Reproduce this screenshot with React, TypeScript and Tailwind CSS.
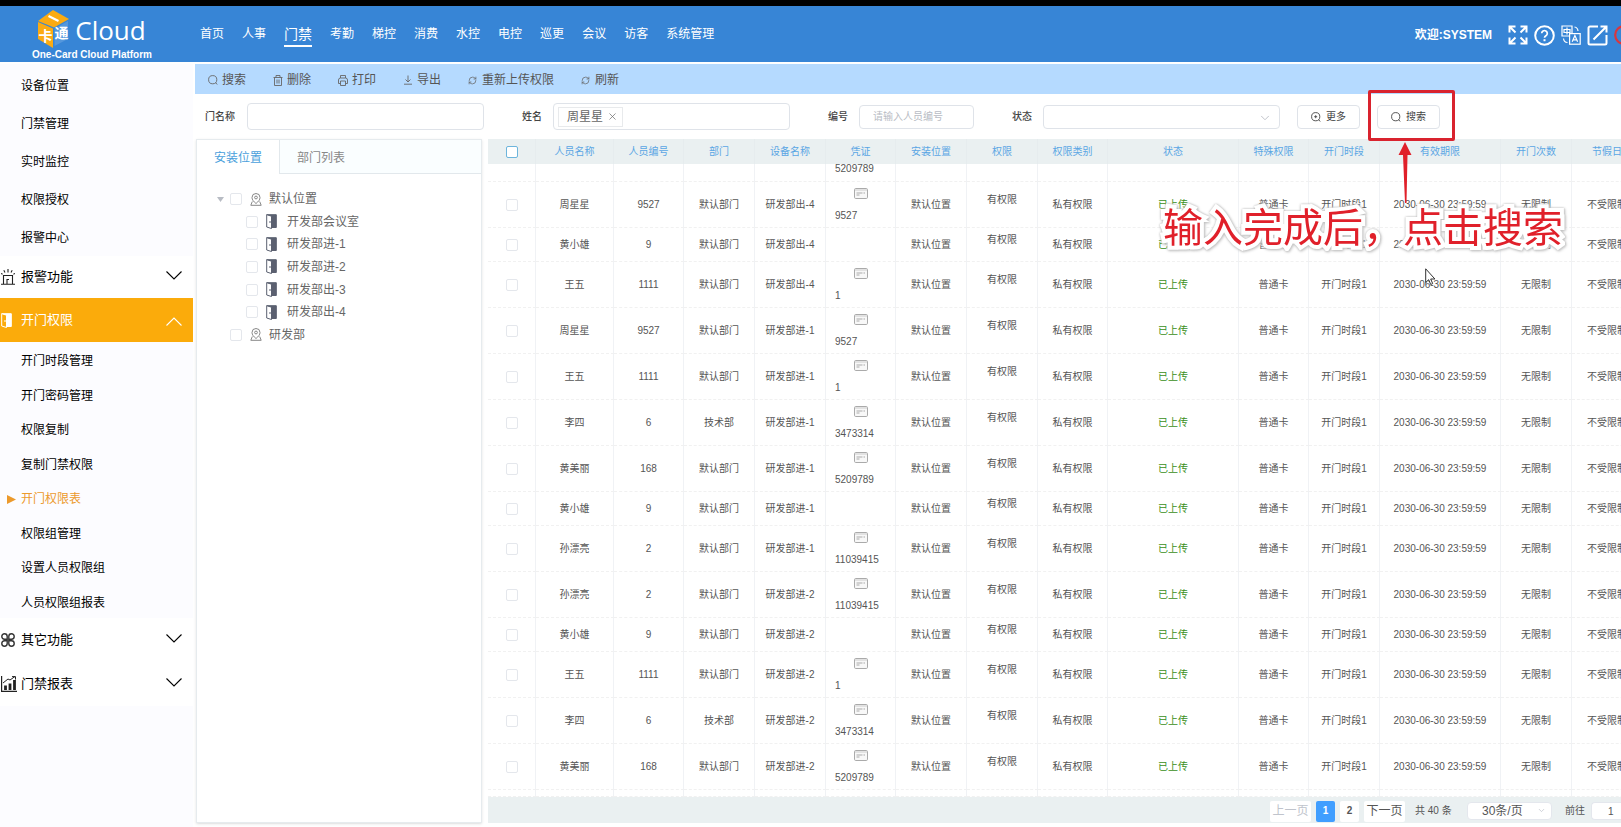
import type { ReactNode } from "react";
import clsx from "clsx";
import { ChevronDown, RefreshCw, X } from "lucide-react";

const navItems = ["首页", "人事", "门禁", "考勤", "梯控", "消费", "水控", "电控", "巡更", "会议", "访客", "系统管理"];

const topMenu = ["设备位置", "门禁管理", "实时监控", "权限授权", "报警中心"];

const subMenu = [
  "开门时段管理",
  "开门密码管理",
  "权限复制",
  "复制门禁权限",
  "开门权限表",
  "权限组管理",
  "设置人员权限组",
  "人员权限组报表",
];

const doors = ["开发部会议室", "研发部进-1", "研发部进-2", "研发部出-3", "研发部出-4"];

const columns = [
  { title: "人员名称", width: "w-[78px]" },
  { title: "人员编号", width: "w-[70px]" },
  { title: "部门", width: "w-[71px]" },
  { title: "设备名称", width: "w-[71px]" },
  { title: "凭证", width: "w-[70px]" },
  { title: "安装位置", width: "w-[71px]" },
  { title: "权限", width: "w-[71px]" },
  { title: "权限类别", width: "w-[70px]" },
  { title: "状态", width: "w-[131px]" },
  { title: "特殊权限", width: "w-[70px]" },
  { title: "开门时段", width: "w-[71px]" },
  { title: "有效期限", width: "w-[121px]" },
  { title: "开门次数", width: "w-[71px]" },
  { title: "节假日", width: "w-[71px]" },
];

type Row = { name: string; code: string; dept: string; device: string; card?: string };

const rows: Row[] = [
  { name: "周星星", code: "9527", dept: "默认部门", device: "研发部出-4", card: "9527" },
  { name: "黄小雄", code: "9", dept: "默认部门", device: "研发部出-4" },
  { name: "王五", code: "1111", dept: "默认部门", device: "研发部出-4", card: "1" },
  { name: "周星星", code: "9527", dept: "默认部门", device: "研发部进-1", card: "9527" },
  { name: "王五", code: "1111", dept: "默认部门", device: "研发部进-1", card: "1" },
  { name: "李四", code: "6", dept: "技术部", device: "研发部进-1", card: "3473314" },
  { name: "黄美丽", code: "168", dept: "默认部门", device: "研发部进-1", card: "5209789" },
  { name: "黄小雄", code: "9", dept: "默认部门", device: "研发部进-1" },
  { name: "孙漂亮", code: "2", dept: "默认部门", device: "研发部进-1", card: "11039415" },
  { name: "孙漂亮", code: "2", dept: "默认部门", device: "研发部进-2", card: "11039415" },
  { name: "黄小雄", code: "9", dept: "默认部门", device: "研发部进-2" },
  { name: "王五", code: "1111", dept: "默认部门", device: "研发部进-2", card: "1" },
  { name: "李四", code: "6", dept: "技术部", device: "研发部进-2", card: "3473314" },
  { name: "黄美丽", code: "168", dept: "默认部门", device: "研发部进-2", card: "5209789" },
];

const Logo = () => (
  <div className="w-[179px] pl-[5px] pt-1 flex flex-col items-center text-white shrink-0">
    <div className="flex items-center gap-1.5 h-[38px]">
      <svg width="31" height="38" viewBox="0 0 31 38">
        <path d="M15 0 31 9 16 17.500 0 11Z" fill="#fbab12" />
        <path d="M0 12 15 18.500V38L0 29Z" fill="#fbab12" />
        <path d="M16.500 18.500 30 11V29L16.500 36Z" fill="#fff" opacity=".15" />
        <path d="m10.500 6 10 5" stroke="#fff" strokeWidth="2.200" />
        <text x="0.500" y="31" fontSize="14" fontWeight="700" fill="#fff">卡</text>
        <text x="16.500" y="28" fontSize="14" fontWeight="700" fill="#fff">通</text>
      </svg>
      <span className="font-['Open_Sans',sans-serif] text-[26px] leading-[38px] pt-0.5">Cloud</span>
    </div>
    <span className="text-[10px] leading-[14px] font-bold">One-Card Cloud Platform</span>
  </div>
);

const ExpandIcon = () => (
  <svg width="20" height="20" viewBox="0 0 20 20" fill="none" stroke="#fff" strokeWidth="2">
    <path d="M1.500 7.500v-6h6M1.500 1.500l6 6M12.500 1.500h6v6M18.500 1.500l-6 6M1.500 12.500v6h6M1.500 18.500l6-6M18.500 12.500v6h-6M18.500 18.500l-6-6" />
  </svg>
);

const HelpIcon = () => (
  <svg width="21" height="21" viewBox="0 0 21 21" fill="none" stroke="#fff" strokeWidth="2">
    <circle cx="10.500" cy="10.500" r="9.300" />
    <path d="M7.700 8.300a2.800 2.800 0 1 1 4.300 2.400c-1 .7-1.500 1-1.500 2.100" strokeWidth="1.700" />
    <path d="M10.500 14.200v2" />
  </svg>
);

const LanguageIcon = () => (
  <svg width="20" height="20" viewBox="0 0 20 20" fill="none" stroke="#fff" strokeWidth="1.200">
    <path d="M8 11H1V1h10v7M3 4.500h6v3H3zM6 2.500v7" />
    <rect x="8.600" y="8.600" width="10.600" height="10.600" />
    <path d="m11.200 16.800 2.700-6.300 2.700 6.300M12.200 14.800h3.400M13.500 2c2 .3 3.300 1.600 3.500 4M2.500 13.500c.2 2.500 1.500 3.800 4 4" />
  </svg>
);

const EditIcon = () => (
  <svg width="21" height="21" viewBox="0 0 21 21" fill="none" stroke="#fff" strokeWidth="2">
    <path d="M11 1.500H3A1.500 1.500 0 0 0 1.500 3v15A1.500 1.500 0 0 0 3 19.500h15a1.500 1.500 0 0 0 1.500-1.500v-8M6.500 14.500l13-13M13.500 1.500h6v6" />
  </svg>
);

const SirenIcon = () => (
  <svg width="14" height="16" viewBox="0 0 14 16" fill="none" stroke="#222" strokeWidth="1.100">
    <path d="M0 15.300h14M2.500 15V6.500h9V15M6 15v-4.500h2M7 0v3.500M2.800 1.200l1.200 2.200M11.200 1.200 10 3.400M0 4.500l1.600.8M14 4.500l-1.600.8" />
  </svg>
);

const DoorIcon = ({ dark = false }: { dark?: boolean }) => (
  <svg width="11" height="15" viewBox="0 0 11 15">
    <path d="M.7.700h9.600v12.800H6" fill={dark ? "#5b6070" : "#fff"} stroke={dark ? "#5b6070" : "#fff"} />
    <path d="M.7.700 5.500 2.200v12.300L.7 13Z" fill={dark ? "#fff" : "#fbab0b"} stroke={dark ? "#5b6070" : "#fff"} />
    <path d="M4 7v2" stroke={dark ? "#5b6070" : "#fff"} />
  </svg>
);

const LoopsIcon = () => (
  <svg width="14" height="14" viewBox="0 0 14 14" fill="none" stroke="#333" strokeWidth="1.400">
    <path d="M6.200 6.200H3.500a2.700 2.700 0 1 1 2.700-2.700ZM7.800 6.200h2.700a2.700 2.700 0 1 0-2.700-2.700ZM6.200 7.800H3.500a2.700 2.700 0 1 0 2.700 2.700ZM7.800 7.800h2.700a2.700 2.700 0 1 1-2.700 2.700Z" />
  </svg>
);

const ChartIcon = () => (
  <svg width="16" height="16" viewBox="0 0 16 16" fill="none" stroke="#222">
    <path d="M.6 0v15.300H16" strokeWidth="1.200" />
    <path d="M4.500 14V9.500M9 14V7.500M13.500 14V4" strokeWidth="2.800" />
    <path d="m2 7 5-4 2 1 5-3.500M11 .6h3.500v3" />
  </svg>
);

const PlaceIcon = () => (
  <svg width="12" height="13" viewBox="0 0 12 13" fill="none" stroke="#888">
    <path d="M6 10.500C3.500 8.500 2 6.700 2 4.500a4 4 0 0 1 8 0c0 2.200-1.500 4-4 6Z" />
    <circle cx="6" cy="4.500" r="1.400" />
    <path d="M2.300 8.500.8 12.300h10.400L9.700 8.500" />
  </svg>
);

const CardIcon = () => (
  <svg width="14" height="11" viewBox="0 0 14 11" fill="none" stroke="#aaa">
    <rect x=".5" y=".5" width="13" height="10" rx="1.200" fill="#f8f8f8" />
    <path d="M1 2h12" stroke="#ccc" />
    <path d="M2.500 5h6M2.500 7h3M9.500 5h1.500" />
  </svg>
);

const SearchIcon = () => (
  <svg width="10" height="10" viewBox="0 0 10 10" fill="none" stroke="currentColor" strokeWidth=".9">
    <circle cx="4.700" cy="4.700" r="4.100" />
    <path d="m7.600 7.600 1.600 1.900" />
  </svg>
);

const MoreIcon = () => (
  <svg width="10" height="10" viewBox="0 0 10 10" fill="none" stroke="currentColor" strokeWidth=".9">
    <circle cx="4.700" cy="4.700" r="4.100" />
    <path d="M4.700 3.200v3M3.200 4.700h3M7.600 7.600l1.600 1.900" />
  </svg>
);

const TrashIcon = () => (
  <svg width="10" height="11" viewBox="0 0 10 11" fill="none" stroke="currentColor" strokeWidth=".9">
    <path d="M.5 2.500h9M3 2.500v-2h4v2M1.500 2.500v8h7v-8M4 4.500v4M6 4.500v4" />
  </svg>
);

const PrintIcon = () => (
  <svg width="10" height="11" viewBox="0 0 10 11" fill="none" stroke="currentColor" strokeWidth=".9">
    <path d="M2.500 3V.5h5V3M2.500 8.500h-2V5A2 2 0 0 1 2.500 3h5a2 2 0 0 1 2 2v3.500h-2M2.500 6h5v4.500h-5z" />
  </svg>
);

const DownloadIcon = () => (
  <svg width="10" height="10" viewBox="0 0 10 10" fill="none" stroke="currentColor" strokeWidth=".9">
    <path d="M1 9.200h8M5 .5v6.300M2.500 4.500 5 7l2.500-2.500" />
  </svg>
);

const tools: { label: string; icon: ReactNode }[] = [
  { label: "搜索", icon: <SearchIcon /> },
  { label: "删除", icon: <TrashIcon /> },
  { label: "打印", icon: <PrintIcon /> },
  { label: "导出", icon: <DownloadIcon /> },
  { label: "重新上传权限", icon: <RefreshCw size={9} /> },
  { label: "刷新", icon: <RefreshCw size={9} /> },
];

const Checkbox = ({ label, active = false }: { label: string; active?: boolean }) => (
  <input
    type="checkbox"
    aria-label={label}
    className={clsx(
      "appearance-none size-3 rounded-xs border bg-white shrink-0 block",
      active ? "border-[#6db5dc]" : "border-[#e4e7ec]"
    )}
  />
);

const Header = () => (
  <header className="h-14 bg-[#3785d6] flex items-stretch text-white overflow-hidden">
    <Logo />
    <nav className="flex items-center gap-[18px] pl-[21px]">
      {navItems.map((item) => (
        <a
          key={item}
          href="#"
          className={clsx(
            "whitespace-nowrap",
            item === "门禁" ? "text-sm leading-[22px] border-b-2 border-white pt-0.5" : "text-xs"
          )}
        >
          {item}
        </a>
      ))}
    </nav>
    <div className="ml-auto flex items-center gap-1.5 shrink-0 pt-0.5">
      <span className="text-xs font-bold mr-2.5">欢迎:SYSTEM</span>
      <button aria-label="全屏"><ExpandIcon /></button>
      <button aria-label="帮助"><HelpIcon /></button>
      <button aria-label="语言"><LanguageIcon /></button>
      <button aria-label="编辑"><EditIcon /></button>
      <button aria-label="退出" className="w-[7px] overflow-hidden">
        <svg width="20" height="20" viewBox="0 0 20 20" className="max-w-none">
          <circle cx="10" cy="10" r="8.800" fill="none" stroke="#d9363e" strokeWidth="2.200" />
        </svg>
      </button>
    </div>
  </header>
);

const MenuGroup = ({ icon, label, className, open = false }: {
  icon: ReactNode;
  label: string;
  className: string;
  open?: boolean;
}) => (
  <button className={clsx("w-full flex items-center pr-[11px] text-[13px]", className)}>
    <span className="w-[21px] flex items-center pl-px">{icon}</span>
    <span>{label}</span>
    <svg
      width="16"
      height="9"
      viewBox="0 0 16 9"
      fill="none"
      stroke="currentColor"
      strokeWidth="1.100"
      className={clsx("ml-auto", open ? "mt-0.5" : "mb-1")}
    >
      <path d={open ? "M.5 8.500 8 1l7.500 7.500" : "M.5.500 8 8 15.500.5"} />
    </svg>
  </button>
);

const Sidebar = () => (
  <aside className="w-[193px] shrink-0 bg-[#fcfcff] text-black pt-0.5">
    {topMenu.map((item) => (
      <a key={item} href="#" className="h-[38px] pl-[21px] pt-px flex items-center text-xs">
        {item}
      </a>
    ))}
    <MenuGroup icon={<SirenIcon />} label="报警功能" className="h-[42px] bg-white" />
    <MenuGroup icon={<DoorIcon />} label="开门权限" className="h-11 bg-[#fbab0b] text-white" open />
    <ul className="h-[276px] grid grid-rows-8">
      {subMenu.map((item) => {
        const active = item === "开门权限表";
        return (
          <li key={item} className={clsx("flex items-center text-xs pt-1", active && "text-[#ec9a2c]")}>
            <span className="w-[21px] pl-[7px]">
              {active && (
                <svg width="9" height="9" viewBox="0 0 9 9" fill="currentColor">
                  <path d="M0 0 9 4.500 0 9Z" />
                </svg>
              )}
            </span>
            <a href="#">{item}</a>
          </li>
        );
      })}
    </ul>
    <MenuGroup icon={<LoopsIcon />} label="其它功能" className="h-11 bg-white" />
    <MenuGroup icon={<ChartIcon />} label="门禁报表" className="h-11 bg-white" />
  </aside>
);

const Toolbar = () => (
  <div className="h-[30px] bg-[#b5daff] flex items-center gap-[27px] pl-[13px] pt-0.5 text-xs text-[#555]">
    {tools.map(({ label, icon }) => (
      <button key={label} className="flex items-center gap-1">
        <span className="w-2.5 text-[#666]">{icon}</span>
        {label}
      </button>
    ))}
  </div>
);

/* step marker drawn around the search button */
const Callout = () => (
  <div className="pointer-events-none">
    <div className="absolute -left-[9px] -top-[15px] w-[87px] h-[51px] border-[3px] border-[#d9232e] rounded-xs z-10" />
    <svg width="14" height="62" viewBox="0 0 14 62" className="absolute left-[21px] top-[37px] z-10" fill="#e0202a">
      <path d="M7 0 13.500 13H9.500L8.500 61H7L5 13H.5Z" />
    </svg>
    <p className="absolute -left-[214px] top-[99px] z-20 whitespace-nowrap text-[40px] leading-[48px] text-[#e0202a] [-webkit-text-stroke:8px_white] [paint-order:stroke_fill] [filter:drop-shadow(0_0_1px_#bbb)_drop-shadow(1px_1px_1px_#ccc)]">
      输入完成后，点击搜索
    </p>
    <svg width="12" height="18" viewBox="0 0 12 18" className="absolute left-12 top-[163px] z-20">
      <path d="M.7.800v13.700l3-2.800 2 4.800 2-.9-2-4.600h4.200Z" fill="#fff" stroke="#333" />
    </svg>
  </div>
);

const Filters = () => (
  <form className="h-[45px] flex items-center pl-2.5 text-[10px] text-[#444] [&_label]:shrink-0">
    <label htmlFor="door" className="w-[42px] font-medium">门名称</label>
    <input id="door" className="w-[237px] h-[27px] border border-[#dfe3e9] rounded shrink-0" />
    <label htmlFor="name" className="w-[31px] ml-[38px] font-medium">姓名</label>
    <div className="w-[237px] h-[27px] border border-[#dfe3e9] rounded flex items-center px-1 shrink-0">
      <span className="h-5 border border-[#e8eaec] flex items-center gap-1 pl-2 pr-1 text-xs text-[#666] shrink-0">
        周星星
        <button type="button" aria-label="移除"><X size={11} strokeWidth={1.5} /></button>
      </span>
      <input id="name" className="w-full min-w-0 h-5" />
    </div>
    <label htmlFor="code" className="w-[31px] ml-[38px] font-medium">编号</label>
    <input
      id="code"
      placeholder="请输入人员编号"
      className="w-[115px] h-6 border border-[#dfe3e9] rounded px-[13px] placeholder:text-[#b8bcc4] shrink-0"
    />
    <label htmlFor="state" className="w-[31px] ml-[38px] font-medium">状态</label>
    <div className="relative w-[237px] shrink-0">
      <select id="state" className="appearance-none w-full h-6 border border-[#dfe3e9] rounded block">
        <option></option>
      </select>
      <ChevronDown size={14} strokeWidth={1.5} className="absolute right-2 top-1.5 text-[#b8bcc4] pointer-events-none" />
    </div>
    <button type="button" className="w-[63px] h-6 ml-[17px] border border-[#dfe3e9] rounded flex items-center justify-center gap-[5px] shrink-0">
      <MoreIcon />
      更多
    </button>
    <div className="relative ml-[17px] shrink-0">
      <button type="submit" className="w-[63px] h-6 border border-[#dfe3e9] rounded flex items-center justify-center gap-[5px]">
        <SearchIcon />
        搜索
      </button>
      <Callout />
    </div>
  </form>
);

const TreePanel = () => (
  <section className="w-[286px] shrink-0 bg-white border border-[#e6ebee] shadow-sm text-xs text-[#666]">
    <div className="h-[34px] flex bg-[#fafeff]">
      <button className="w-[83px] pt-0.5 bg-white text-[#4a9fdc] border-r border-[#e2e8ec]">安装位置</button>
      <button className="flex-1 pt-0.5 text-left pl-[17px] text-[#888] border-b border-[#e2e8ec]">部门列表</button>
    </div>
    <ul className="h-[158px] mt-3.5 grid grid-rows-7">
      <li className="flex items-center pl-5">
        <svg width="7" height="5" viewBox="0 0 7 5" fill="#b8bcc4" className="mr-1.5">
          <path d="M0 0h7L3.500 5Z" />
        </svg>
        <Checkbox label="默认位置" />
        <span className="w-[27px] pl-2"><PlaceIcon /></span>
        默认位置
      </li>
      {doors.map((door) => (
        <li key={door} className="flex items-center pl-[49px]">
          <Checkbox label={door} />
          <span className="w-[29px] pl-2"><DoorIcon dark /></span>
          {door}
        </li>
      ))}
      <li className="flex items-center pl-[33px]">
        <Checkbox label="研发部" />
        <span className="w-[27px] pl-2"><PlaceIcon /></span>
        研发部
      </li>
    </ul>
  </section>
);

const PermissionTable = () => (
  <table className="table-fixed w-[1155px] border-separate border-spacing-0 text-[10px] leading-[14px] text-center text-[#555] [&_td]:border-r [&_td]:border-b [&_td]:border-r-[#f0f2f5] [&_td]:border-b-[#f1f1f1] [&_td]:[border-bottom-style:dashed] [&_td]:whitespace-nowrap">
    <thead>
      <tr className="h-[25px] bg-[#eaf0f1] text-[#5aa6e4]">
        <th className="w-12 border-r border-[#e6ecee]">
          <div className="flex justify-center"><Checkbox label="全选" active /></div>
        </th>
        {columns.map(({ title, width }) => (
          <th key={title} className={clsx("font-normal border-r border-[#e6ecee]", width)}>
            {title}
          </th>
        ))}
      </tr>
    </thead>
    <tbody>
      <tr className="h-[18px]">
        <td />
        {columns.map(({ title }) => (
          <td key={title} className="text-left pl-[9px] align-top leading-[10px]">
            {title === "凭证" && "5209789"}
          </td>
        ))}
      </tr>
      {rows.map(({ name, code, dept, device, card }, i) => (
        <tr key={i} className={card ? "h-[46px]" : "h-[34px]"}>
          <td>
            <div className="flex justify-center"><Checkbox label={name} /></div>
          </td>
          <td>{name}</td>
          <td>{code}</td>
          <td>{dept}</td>
          <td>{device}</td>
          <td className="align-top">
            {card && (
              <div className="pt-1.5 flex flex-col items-center gap-2.5">
                <CardIcon />
                <span className="self-start pl-[9px]">{card}</span>
              </div>
            )}
          </td>
          <td>默认位置</td>
          <td className="pb-2.5">有权限</td>
          <td>私有权限</td>
          <td className="text-[#3a8f22]">已上传</td>
          <td>普通卡</td>
          <td>开门时段1</td>
          <td>2030-06-30 23:59:59</td>
          <td>无限制</td>
          <td>不受限制</td>
        </tr>
      ))}
      <tr className="h-[7px]">
        <td />
        {columns.map(({ title }) => (
          <td key={title} />
        ))}
      </tr>
    </tbody>
  </table>
);

const Pagination = () => (
  <div className="h-[26px] bg-[#eaf0f1] flex items-center justify-end pt-0.5 text-xs text-[#555]">
    <button disabled className="w-[41px] h-[21px] bg-white text-[#c0c4cc] rounded-xs">上一页</button>
    <button className="w-[19px] h-[21px] ml-[5px] bg-[#409eff] text-white text-[10px] font-bold rounded-xs">1</button>
    <button className="w-[19px] h-[21px] ml-[5px] bg-white text-[10px] font-bold rounded-xs">2</button>
    <button className="w-[41px] h-[21px] ml-[5px] bg-white rounded-xs">下一页</button>
    <span className="ml-2.5 w-[52px] text-[10px]">共 40 条</span>
    <div className="relative w-[85px]">
      <select aria-label="每页条数" className="appearance-none block w-full h-[18px] bg-white border border-[#e4e7ed] rounded pl-3.5">
        <option>30条/页</option>
      </select>
      <ChevronDown size={9} className="absolute right-1.5 top-1 text-[#c0c4cc] pointer-events-none" />
    </div>
    <label htmlFor="page" className="ml-[13px] w-[26px] text-[10px]">前往</label>
    <input id="page" defaultValue="1" className="w-[30px] h-[18px] bg-white border border-r-0 border-[#e4e7ed] rounded-l pl-4 text-[10px]" />
  </div>
);

export default function App() {
  return (
    <div className="min-h-screen flex flex-col overflow-x-hidden bg-white font-['Liberation_Sans','Noto_Sans_CJK_SC',sans-serif]">
      <div className="h-1.5 bg-black" />
      <Header />
      <div className="flex-1 flex pt-0.5">
        <Sidebar />
        <main className="flex-1 min-w-0 flex flex-col pl-0.5 pb-1">
          <Toolbar />
          <Filters />
          <div className="flex-1 flex pl-px gap-1.5">
            <TreePanel />
            <div className="flex-1 min-w-0 flex flex-col">
              <div className="overflow-hidden">
                <PermissionTable />
              </div>
              <Pagination />
            </div>
          </div>
        </main>
      </div>
    </div>
  );
}
